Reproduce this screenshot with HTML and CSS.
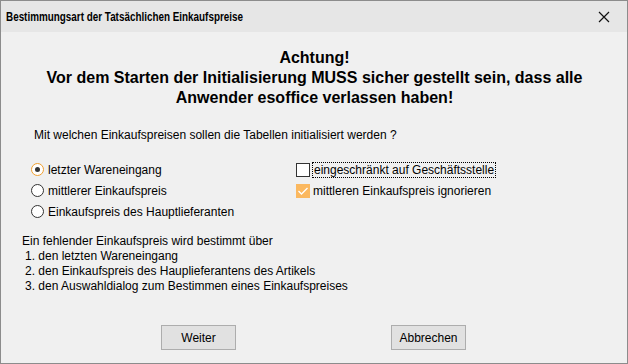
FILE: index.html
```html
<!DOCTYPE html>
<html>
<head>
<meta charset="utf-8">
<link rel="stylesheet" href="styles.css">
</head>
<body>
<div class="window">
  <div class="titlebar">
    <span class="title">Bestimmungsart der Tatsächlichen Einkaufspreise</span>
    <svg class="close" width="12" height="12" viewBox="0 0 12 12"><path d="M1 1 L11 11 M11 1 L1 11" stroke="#111" stroke-width="1.2" fill="none"/></svg>
  </div>
  <div class="content">
    <div class="warning">Achtung!<br>Vor dem Starten der Initialisierung MUSS sicher gestellt sein, dass alle<br>Anwender esoffice verlassen haben!</div>
    <div class="question">Mit welchen Einkaufspreisen sollen die Tabellen initialisiert werden ?</div>
    <div class="options">
      <div class="col-left">
        <div class="opt"><span class="radio checked"></span><span>letzter Wareneingang</span></div>
        <div class="opt"><span class="radio"></span><span>mittlerer Einkaufspreis</span></div>
        <div class="opt"><span class="radio"></span><span>Einkaufspreis des Hauptlieferanten</span></div>
      </div>
      <div class="col-right">
        <div class="opt"><span class="check"></span><span class="focus">eingeschränkt auf Geschäftsstelle</span></div>
        <div class="opt"><span class="check checked"><svg width="14" height="14" viewBox="0 0 14 14"><path d="M2.5 7 L5.5 10 L11.5 4" stroke="#fff" stroke-width="1.3" fill="none"/></svg></span><span>mittleren Einkaufspreis ignorieren</span></div>
      </div>
    </div>
    <div class="info">
      <div>Ein fehlender Einkaufspreis wird bestimmt über</div>
      <div class="item">1. den letzten Wareneingang</div>
      <div class="item">2. den Einkaufspreis des Hauplieferantens des Artikels</div>
      <div class="item">3. den Auswahldialog zum Bestimmen eines Einkaufspreises</div>
    </div>
    <div class="buttons">
      <button class="btn">Weiter</button>
      <button class="btn">Abbrechen</button>
    </div>
  </div>
</div>
</body>
</html>
```

FILE: styles.css
```css
html, body {
  margin: 0;
  padding: 0;
  background: #f0f0f0;
}
.window {
  width: 628px;
  height: 364px;
  box-sizing: border-box;
  border: 1px solid #8c8c8c;
  background: #f0f0f0;
  display: flex;
  flex-direction: column;
  font-family: "Liberation Sans", Arial, sans-serif;
  font-size: 12px;
  color: #000;
}
.titlebar {
  height: 31px;
  flex: none;
  background: #e6e6e6;
  display: flex;
  align-items: center;
  justify-content: space-between;
  padding: 0 17px 0 5px;
}
.title {
  font-weight: bold;
  font-size: 13px;
  display: inline-block;
  transform: scaleX(0.76);
  transform-origin: left center;
}
.close { display: block; }
.content {
  flex: 1;
  display: flex;
  flex-direction: column;
  padding: 16px 20px 0 21px;
}
.warning {
  text-align: center;
  font-weight: bold;
  font-size: 16px;
  line-height: 20px;
}
.question {
  margin-top: 20px;
  padding-left: 12px;
  font-size: 12px;
}
.options {
  display: flex;
  margin-top: 17px;
  padding-left: 9px;
}
.col-left { width: 265px; }
.opt {
  display: flex;
  align-items: center;
  height: 21px;
}
.radio {
  width: 11px;
  height: 11px;
  border: 1px solid #333;
  border-radius: 50%;
  background: #fff;
  margin-right: 4px;
  position: relative;
  flex: none;
}
.radio.checked {
  border-color: #f0a030;
}
.radio.checked::after {
  content: "";
  position: absolute;
  left: 3px;
  top: 3px;
  width: 5px;
  height: 5px;
  border-radius: 50%;
  background: #333;
}
.check {
  width: 12px;
  height: 12px;
  border: 1px solid #333;
  background: #fff;
  margin-right: 3px;
  flex: none;
  display: flex;
}
.check.checked {
  width: 14px;
  height: 14px;
  border: none;
  background: #fbb85f;
}
.focus {
  outline: 1px dotted #000;
  outline-offset: 0;
  padding: 0 1px;
}
.info {
  margin-top: 12px;
  line-height: 15px;
}
.item { padding-left: 3px; }
.buttons {
  display: flex;
  margin-top: auto;
  margin-bottom: 13px;
  padding-left: 139px;
  gap: 155px;
}
.btn {
  width: 75px;
  height: 25px;
  border: 1px solid #adadad;
  background: #e1e1e1;
  font-family: "Liberation Sans", Arial, sans-serif;
  font-size: 12px;
  color: #000;
  padding: 0;
}
```
